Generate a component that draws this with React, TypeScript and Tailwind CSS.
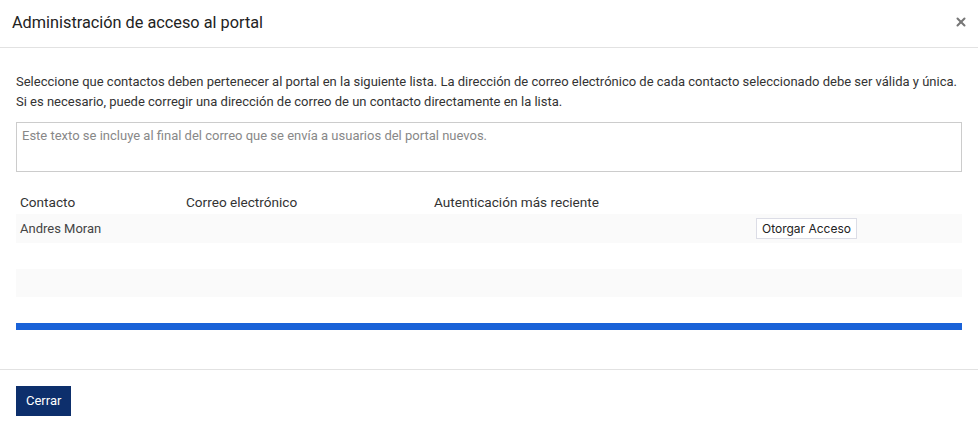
import { X } from "lucide-react";

export default function App() {
  return (
    <div className="w-[978px] h-[433px] bg-white flex flex-col font-['Roboto',sans-serif] text-[#333]">
      {/* header */}
      <div className="h-[48px] flex items-center justify-between pl-3 pr-[10px] border-b border-[#e2e2e2]">
        <h1 className="text-[16.3px] text-[#222] leading-none mt-[-1px]">Administración de acceso al portal</h1>
        <button className="text-[#777] mt-[-3px]">
          <X size={14} strokeWidth={3.5} />
        </button>
      </div>

      {/* body */}
      <div className="flex-1 px-4 pt-[24px]">
        <p className="text-[13px] leading-[20px] text-[#333]">
          Seleccione que contactos deben pertenecer al portal en la siguiente lista. La dirección de correo electrónico de cada contacto seleccionado debe ser válida y única.
          <br />
          Si es necesario, puede corregir una dirección de correo de un contacto directamente en la lista.
        </p>

        <textarea
          className="mt-[10px] block w-full h-[50px] border border-[#cccccc] px-[5px] py-[5px] text-[13px] leading-[16px] resize-none outline-none placeholder:text-[#888]"
          placeholder="Este texto se incluye al final del correo que se envía a usuarios del portal nuevos."
        />

        <div className="mt-[19px] text-[13px]">
          <div className="flex h-[23px] items-center text-[#333] text-[13.6px]">
            <div className="w-[170px] pl-1">Contacto</div>
            <div className="w-[248px]">Correo electrónico</div>
            <div>Autenticación más reciente</div>
          </div>
          <div className="flex h-[29px] items-center bg-[#fafafa]">
            <div className="w-[170px] pl-1 text-[#444]">Andres Moran</div>
            <div className="w-[248px]" />
            <div className="w-[322px]" />
            <button className="h-[21px] px-[5px] border border-[#dcdde6] bg-white text-[12px] text-[#222] font-['Inter',sans-serif] leading-none">
              Otorgar Acceso
            </button>
          </div>
          <div className="h-[26px]" />
          <div className="h-[28px] bg-[#fafafa]" />
        </div>

        <div className="mt-[26px] h-[7px] bg-[#1a62d8]" />
      </div>

      {/* footer */}
      <div className="h-[64px] border-t border-[#e2e2e2] px-4 pt-[16px]">
        <button className="h-[30px] px-[10px] bg-[#0d2f6c] text-white text-[13px]">Cerrar</button>
      </div>
    </div>
  );
}
